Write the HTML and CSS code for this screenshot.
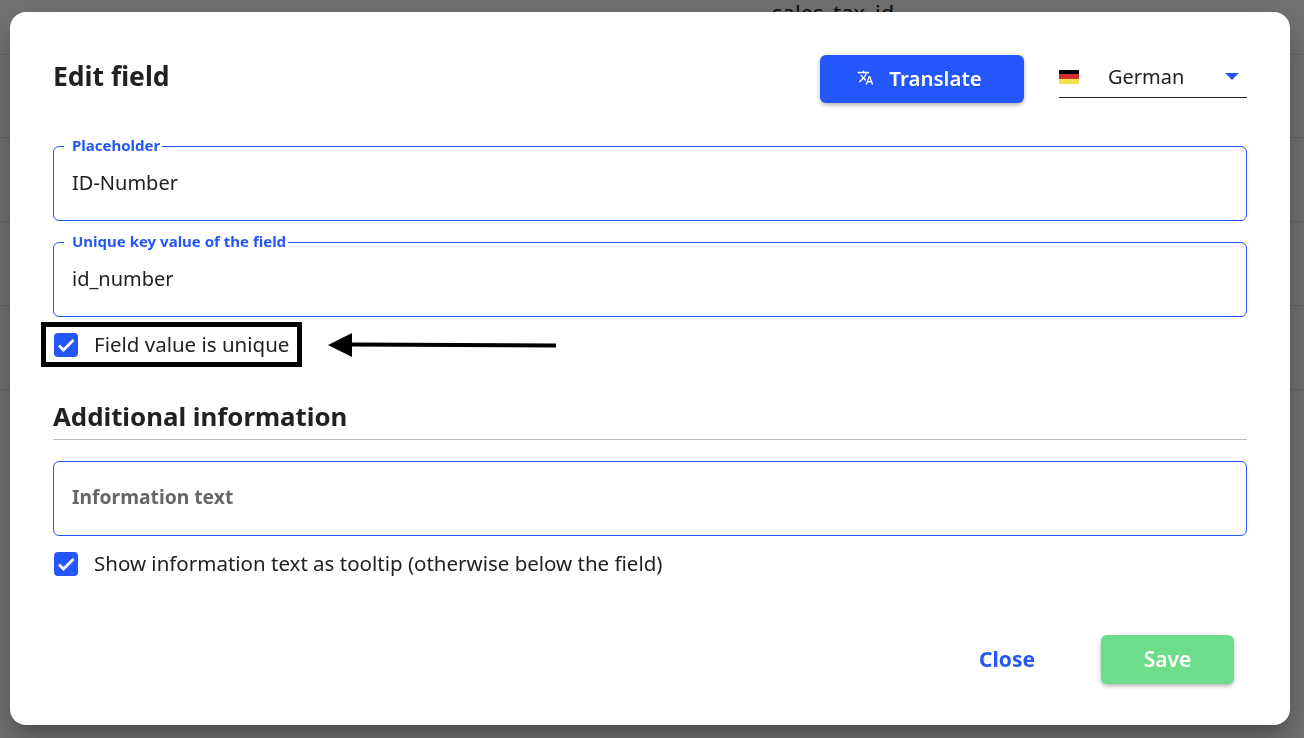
FILE: index.html
```html
<!DOCTYPE html>
<html lang="en">
<head>
    <meta charset="UTF-8">
    <meta name="viewport" content="width=device-width, initial-scale=1.0">
    <title>Edit field</title>
    <link rel="stylesheet" href="styles.css">
</head>
<body>
    <div class="page">
        <div class="page-row page-row-first"><span class="page-cell">sales_tax_id</span></div>
        <div class="page-row page-row-second"></div>
        <div class="page-row"></div>
        <div class="page-row"></div>
        <div class="page-row"></div>
    </div>

    <div class="backdrop"></div>

    <div class="dialog">
        <div class="dialog-header">
            <h2 class="dialog-title">Edit field</h2>
            <button class="btn btn-translate">
                <svg class="translate-icon" viewBox="0 0 24 24" width="17" height="17" fill="currentColor"><path d="M12.87 15.07l-2.54-2.51.03-.03c1.74-1.94 2.98-4.17 3.71-6.53H17V4h-7V2H8v2H1v1.99h11.17C11.5 7.92 10.44 9.75 9 11.35 8.07 10.32 7.3 9.19 6.69 8h-2c.73 1.63 1.73 3.17 2.98 4.56l-5.09 5.02L4 19l5-5 3.11 3.11.76-2.04zM18.5 10h-2L12 22h2l1.12-3h4.75L21 22h2l-4.5-12zm-2.62 7l1.62-4.33L19.12 17h-3.24z"/></svg>
                Translate
            </button>
            <div class="lang-select">
                <span class="flag"><i class="flag-black"></i><i class="flag-red"></i><i class="flag-gold"></i></span>
                <span class="lang-name">German</span>
                <span class="lang-caret"></span>
            </div>
        </div>

        <fieldset class="field">
            <legend>Placeholder</legend>
            <div class="field-value">ID-Number</div>
        </fieldset>

        <fieldset class="field field-second">
            <legend>Unique key value of the field</legend>
            <div class="field-value">id_number</div>
        </fieldset>

        <div class="check-row check-row-marked">
            <div class="marker">
                <span class="checkbox"><svg viewBox="0 0 24 24" width="24" height="24"><path d="M5 12.5l4.5 4.5L19.5 7" fill="none" stroke="#fff" stroke-width="2.8"/></svg></span>
                <span class="check-label">Field value is unique</span>
            </div>
            <svg class="arrow" viewBox="0 0 228 24" width="228" height="24"><path d="M24 11.5L228 12.5" stroke="#000" stroke-width="4"/><path d="M0 12L24 0V24Z" fill="#000"/></svg>
        </div>

        <h3 class="section-title">Additional information</h3>

        <div class="field field-plain">
            <div class="field-hint">Information text</div>
        </div>

        <div class="check-row check-row-tooltip">
            <span class="checkbox"><svg viewBox="0 0 24 24" width="24" height="24"><path d="M5 12.5l4.5 4.5L19.5 7" fill="none" stroke="#fff" stroke-width="2.8"/></svg></span>
            <span class="check-label">Show information text as tooltip (otherwise below the field)</span>
        </div>

        <div class="dialog-actions">
            <button class="btn btn-close">Close</button>
            <button class="btn btn-save">Save</button>
        </div>
    </div>
</body>
</html>
```

FILE: styles.css
```css
* {
    margin: 0;
    padding: 0;
    box-sizing: border-box;
}

body {
    font-family: "Noto Sans", "Open Sans", sans-serif;
    background: #fff;
    color: #212121;
    height: 100vh;
    overflow: hidden;
}

.page-row {
    height: 84px;
    border-bottom: 1px solid #e0e0e0;
}

.page-row-first {
    height: 55px;
    padding-left: 772px;
    font-size: 22px;
    line-height: 24px;
}

.page-row-second {
    height: 83px;
}

.backdrop {
    position: fixed;
    inset: 0;
    background: rgba(0, 0, 0, 0.55);
}

.dialog {
    position: fixed;
    top: 12px;
    left: 10px;
    width: 1280px;
    height: 713px;
    padding: 0 43px;
    background: #fff;
    border-radius: 16px;
    box-shadow: 0 11px 15px -7px rgba(0,0,0,0.2), 0 24px 38px 3px rgba(0,0,0,0.14), 0 9px 46px 8px rgba(0,0,0,0.12);
}

.dialog-header {
    display: flex;
    align-items: center;
    height: 125px;
}

.dialog-title {
    font-size: 26.5px;
    font-weight: 700;
    flex: 1;
    margin-top: 3px;
}

.btn {
    border: none;
    font-family: inherit;
    font-weight: 600;
    font-size: 21px;
    border-radius: 6px;
    padding-bottom: 2px;
    cursor: pointer;
}

.btn-translate {
    display: flex;
    align-items: center;
    justify-content: center;
    gap: 15px;
    width: 204px;
    height: 48px;
    margin-top: 8px;
    padding: 0 5px 2px 0;
    font-size: 20.5px;
    color: #fff;
    background: #2356fb;
    box-shadow: 0 2px 4px rgba(0,0,0,0.3);
}

.lang-select {
    display: flex;
    align-items: center;
    width: 188px;
    height: 42px;
    margin-left: 35px;
    margin-top: 5px;
    border-bottom: 1px solid #212121;
    font-size: 20px;
}

.flag {
    display: flex;
    flex-direction: column;
    width: 20px;
    height: 14px;
}

.flag i {
    flex: 1;
}

.flag-black { background: #000; }
.flag-red { background: #d0312d; }
.flag-gold { background: #eee24e; }

.lang-name {
    margin-left: 29px;
    flex: 1;
}

.lang-caret {
    width: 0;
    height: 0;
    margin-right: 8px;
    border-left: 7px solid transparent;
    border-right: 7px solid transparent;
    border-top: 7px solid #2356fb;
}

.field {
    display: block;
    height: 84px;
    border: 1px solid #2356fb;
    border-radius: 6px;
    padding: 0 18px;
    min-width: 0;
}

.field legend {
    margin-left: -8px;
    padding: 0 2px 2px 8px;
    font-size: 15px;
    line-height: 16px;
    font-weight: 700;
    color: #2356fb;
}

.field-second {
    margin-top: 12px;
}

.field-value {
    font-size: 20px;
    line-height: 28px;
    margin-top: 14px;
}

.field-plain {
    display: flex;
    align-items: center;
    height: 75px;
}

.field-hint {
    font-size: 19.3px;
    font-weight: 700;
    color: #666;
    margin-top: -4px;
}

.check-row {
    display: flex;
    align-items: center;
    gap: 16px;
    font-size: 20.5px;
}

.check-label {
    margin-top: -2px;
}

.check-row-tooltip {
    height: 24px;
    margin-top: 16px;
    margin-left: 1px;
}

.check-row-marked {
    height: 45px;
    margin-top: 5px;
    gap: 26px;
    margin-left: -12px;
}

.marker {
    display: flex;
    align-items: center;
    gap: 16px;
    height: 45px;
    padding: 0 8px;
    border: 5px solid #000;
}

.checkbox {
    display: flex;
    align-items: center;
    justify-content: center;
    width: 24px;
    height: 24px;
    background: #2356fb;
    border-radius: 4px;
}

.section-title {
    margin-top: 31px;
    margin-bottom: 21px;
    padding-bottom: 5px;
    font-size: 25.8px;
    font-weight: 700;
    border-bottom: 1px solid #bdbdc4;
}

.dialog-actions {
    display: flex;
    justify-content: flex-end;
    align-items: center;
    gap: 44px;
    margin-top: 59px;
    padding-right: 13px;
}

.btn-close {
    width: 100px;
    height: 48px;
    background: none;
    color: #2356fb;
    font-weight: 700;
}

.btn-save {
    width: 133px;
    height: 49px;
    color: #fff;
    background: #6ddd8b;
    box-shadow: 0 2px 4px rgba(0,0,0,0.3);
}
```
